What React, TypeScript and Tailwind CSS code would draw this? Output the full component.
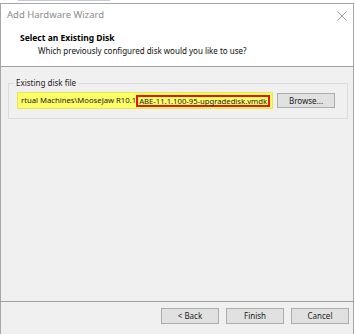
import React from "react";

function CloseGlyph() {
  return (
    <svg width="10" height="10" viewBox="0 0 10 10">
      <path d="M0.5 0.5 L9.5 9.5 M9.5 0.5 L0.5 9.5" stroke="#9a9a9a" strokeWidth="1" fill="none" />
    </svg>
  );
}

function WinButton({ label }: { label: string }) {
  return (
    <button className="w-[58px] h-[16px] bg-[#e1e1e1] border border-[#adadad] text-[8px] leading-[14px] text-[#222]">
      {label}
    </button>
  );
}

export default function App() {
  return (
    <div className="w-[355px] h-[334px] bg-white overflow-hidden font-['Noto_Sans',sans-serif]">
      {/* sliver of the window behind */}
      <div className="h-[3px] flex">
        <div className="ml-[18px] w-[92px] h-px bg-[#c3cad6]" />
      </div>

      <div className="w-[354px] h-[331px] border-x border-t border-[#a6a6a6] flex flex-col">
        <div className="h-[23px] flex items-center justify-between pl-[6px] pr-[6px] bg-white">
          <span className="text-[9.5px] text-[#8c8c8c]">Add Hardware Wizard</span>
          <CloseGlyph />
        </div>

        <div className="h-[40px] border-b border-[#a0a0a0] bg-white pt-[4px] pl-[19px]">
          <div className="text-[8.5px] leading-[13px] font-bold text-black">Select an Existing Disk</div>
          <div className="pl-[18px] text-[8px] leading-[13px] text-[#111]">
            Which previously configured disk would you like to use?
          </div>
        </div>

        <div className="flex-1 bg-[#f0f0f0] pt-[9px] pl-[7px]">
          <fieldset className="w-[340px] border border-[#dcdcdc] pl-[8px] pt-[2px] pb-[9px]">
            <legend className="ml-[-3px] px-[2px] text-[8px] leading-[14px] text-[#222]">Existing disk file</legend>
            <div className="flex items-center gap-[4px]">
              <div className="w-[256px] h-[17px] bg-[#fdfd66] border border-[#e6e65a] flex items-center pl-[3px] whitespace-nowrap text-[7.7px] text-[#222]">
                <span className="shrink-0">rtual Machines\MooseJaw R10.1</span>
                <span className="shrink-0 h-[12px] border-2 border-[#e8141c] px-[1px] flex items-center leading-[8px]">
                  ABE-11.1.100-95-upgradedisk.vmdk
                </span>
              </div>
              <button className="w-[58px] h-[15px] bg-[#e1e1e1] border border-[#adadad] text-[8px] leading-[13px] text-[#222]">
                Browse...
              </button>
            </div>
          </fieldset>
        </div>

        <div className="h-px bg-[#a0a0a0]" />

        <div className="h-[32px] bg-[#f0f0f0] flex justify-end items-start gap-[7px] pt-[6px] pr-[4px]">
          <WinButton label="< Back" />
          <WinButton label="Finish" />
          <WinButton label="Cancel" />
        </div>
      </div>
    </div>
  );
}
